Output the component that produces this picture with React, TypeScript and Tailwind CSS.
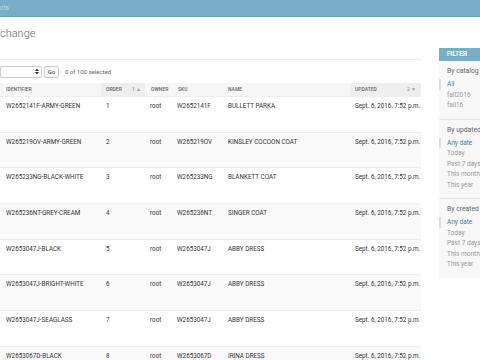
import React from "react";

const rows = [
  { id: "W2652141F-ARMY-GREEN", order: 1, sku: "W2652141F", name: "BULLETT PARKA" },
  { id: "W265219OV-ARMY-GREEN", order: 2, sku: "W265219OV", name: "KINSLEY COCOON COAT" },
  { id: "W265233NG-BLACK-WHITE", order: 3, sku: "W265233NG", name: "BLANKETT COAT" },
  { id: "W265236NT-GREY-CREAM", order: 4, sku: "W265236NT", name: "SINGER COAT" },
  { id: "W2653047J-BLACK", order: 5, sku: "W2653047J", name: "ABBY DRESS" },
  { id: "W2653047J-BRIGHT-WHITE", order: 6, sku: "W2653047J", name: "ABBY DRESS" },
  { id: "W2653047J-SEAGLASS", order: 7, sku: "W2653047J", name: "ABBY DRESS" },
  { id: "W2653067D-BLACK", order: 8, sku: "W2653067D", name: "IRINA DRESS" },
];

const filters = [
  { title: "By catalog", items: ["All", "fall2016", "fall16"] },
  { title: "By updated", items: ["Any date", "Today", "Past 7 days", "This month", "This year"] },
  { title: "By created", items: ["Any date", "Today", "Past 7 days", "This month", "This year"] },
];

const cols = "grid grid-cols-[101px_44px_27px_50px_128px_71px]";

const App: React.FC = () => {
  return (
    <div
      className="relative w-[480px] h-[360px] overflow-hidden bg-white text-[#333]"
      style={{ fontFamily: "Roboto, 'Liberation Sans', sans-serif" }}
    >
      {/* Breadcrumbs bar */}
      <div className="h-[17px] bg-[#79aec8] border-b border-[#6a9fb9] flex items-center">
        <span className="text-[6.5px] text-[#c4dce8] leading-none">cts</span>
      </div>

      <div className="flex">
        {/* Main content */}
        <div className="w-[421px] shrink-0">
          <h1 className="mt-[10px] h-[14px] text-[11px] font-light text-[#666] leading-[14px]">change</h1>

          <div className="mt-[18px] border-t border-[#eaeaea]" />

          {/* Actions */}
          <div className="mt-[5px] h-[13px] flex items-center gap-[2px]">
            <div className="w-[42px] h-[12px] bg-white border border-[#ccc] rounded-[2px] flex items-center justify-end pr-[2px]">
              <svg width="4" height="7" viewBox="0 0 4 7">
                <path d="M0 3 L2 0.5 L4 3 Z M0 4 L2 6.5 L4 4 Z" fill="#333" />
              </svg>
            </div>
            <button className="w-[15px] h-[12px] bg-[#f8f8f8] border border-[#ccc] rounded-[2px] text-[6px] text-[#333] leading-none">
              Go
            </button>
            <span className="ml-[4px] text-[6px] text-[#666]">0 of 100 selected</span>
          </div>

          {/* Table */}
          <div className="mt-[5px]">
            <div className={`${cols} h-[14px] bg-[#f6f6f6] border-b border-[#eee] text-[5px] uppercase text-[#666] font-medium`}>
              <div className="pl-[6px] flex items-center">Identifier</div>
              <div className="pl-[5px] pr-[4px] flex items-center justify-between bg-[#eeeeee]">
                <span>Order</span>
                <span className="text-[#999]">1 ▲</span>
              </div>
              <div className="pl-[6px] flex items-center">Owner</div>
              <div className="pl-[6px] flex items-center">SKU</div>
              <div className="pl-[6px] flex items-center">Name</div>
              <div className="pl-[5px] pr-[5px] flex items-center justify-between bg-[#eeeeee]">
                <span>Updated</span>
                <span className="text-[#999]">2 ▼</span>
              </div>
            </div>
            {rows.map((r, i) => (
              <div
                key={r.id}
                className={`${cols} h-[35.7px] border-b border-[#eee] text-[6.3px] leading-[8px] pt-[5px] whitespace-nowrap ${
                  i % 2 === 1 ? "bg-[#f9f9f9]" : "bg-white"
                }`}
              >
                <div className="pl-[6px]">{r.id}</div>
                <div className="pl-[5px]">{r.order}</div>
                <div className="pl-[5px]">root</div>
                <div className="pl-[5px]">{r.sku}</div>
                <div className="pl-[6px]">{r.name}</div>
                <div className="pl-[5px]">Sept. 6, 2016, 7:52 p.m.</div>
              </div>
            ))}
          </div>
        </div>

        {/* Filter sidebar */}
        <div className="ml-[18px] mt-[31px] w-[60px] shrink-0 self-start bg-[#f8f8f8] whitespace-nowrap">
          <div className="h-[13px] bg-[#79aec8] pl-[8px] flex items-center text-[6.5px] font-bold text-white">
            FILTER
          </div>
          {filters.map((f, fi) => (
            <div key={f.title} className={`pb-[8px] ${fi > 0 ? "border-t border-[#e4e4e4]" : ""}`}>
              <div className="pl-[8px] pt-[5px] h-[18px] text-[6.8px] text-[#666] leading-[10px]">{f.title}</div>
              {f.items.map((it, ii) => (
                <div
                  key={it}
                  className={`h-[10.5px] text-[6.5px] leading-[10.5px] ${
                    ii === 0 ? "text-[#447e9b] border-l-2 border-[#ddd] pl-[6px]" : "text-[#999] pl-[8px]"
                  }`}
                >
                  {it}
                </div>
              ))}
            </div>
          ))}
        </div>
      </div>
    </div>
  );
};

export default App;
